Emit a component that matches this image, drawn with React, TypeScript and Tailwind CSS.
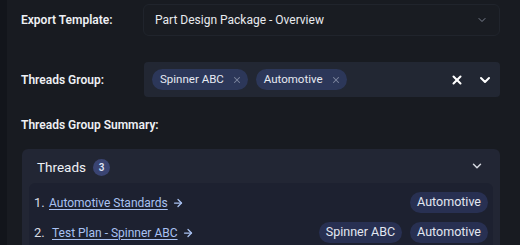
import { ChevronDown, X, ArrowRight } from "lucide-react";

const THREADS = [
  { n: 1, title: "Automotive Standards", tags: ["Automotive"], indent: "w-[15px]" },
  { n: 2, title: "Test Plan - Spinner ABC", tags: ["Spinner ABC", "Automotive"], indent: "w-[18px]" },
];

function Chip({ label }: { label: string }) {
  return (
    <span className="flex items-center gap-[8px] h-[21px] pl-[8px] pr-[6px] rounded-full bg-[#2c3759] text-[11.5px] text-[#e6e9f2]">
      {label}
      <X className="w-2.5 h-2.5 text-[#7d869e]" strokeWidth={2.5} />
    </span>
  );
}

export default function App() {
  return (
    <div
      className="w-[520px] h-[245px] overflow-hidden flex bg-[#181b21] text-white"
      style={{ fontFamily: "Roboto, 'Noto Sans', sans-serif" }}
    >
      <div className="w-[7px] flex-shrink-0 bg-[#12151b]" />
      <div className="flex-1 pl-[14px] pr-[20px] pt-[4px]">
        {/* Export Template */}
        <div className="flex items-center h-[32px]">
          <div className="w-[122px] text-[12px] font-semibold text-[#eef0f4]">Export Template:</div>
          <div className="flex-1 h-[32px] flex items-center justify-between pl-[11px] pr-[11px] rounded-md border border-[#20242c] bg-[#191c22]">
            <span className="text-[12px] text-[#e8eaee]">Part Design Package - Overview</span>
            <ChevronDown className="w-3 h-3 text-[#7b8190]" />
          </div>
        </div>

        {/* Threads Group */}
        <div className="flex items-center h-[35px] mt-[26px]">
          <div className="w-[123px] text-[12px] font-semibold text-[#eef0f4]">Threads Group:</div>
          <div className="flex-1 h-[35px] flex items-center gap-[8px] pl-[8px] pr-[7px] rounded-[4px] bg-[#222733]">
            <Chip label="Spinner ABC" />
            <Chip label="Automotive" />
            <div className="ml-auto flex items-center gap-[13px]">
              <X className="w-3.5 h-3.5 text-white" strokeWidth={3.5} />
              <ChevronDown className="w-4 h-4 text-white" strokeWidth={3} />
            </div>
          </div>
        </div>

        <div className="mt-[19px] text-[12px] font-semibold text-[#eef0f4] leading-[18px]">
          Threads Group Summary:
        </div>

        {/* Summary card */}
        <div className="mt-[15px] ml-[1px] rounded-t-md bg-[#222634] pt-[5px] px-[7px]">
          <div className="flex items-center h-[26px] pl-[8px] pr-[9px]">
            <span className="text-[13.5px] text-[#eef0f4]">Threads</span>
            <span className="ml-[7px] w-[17px] h-[17px] rounded-full bg-[#3a4472] flex items-center justify-center text-[10px] font-semibold text-[#dfe4f5]">
              3
            </span>
            <ChevronDown className="ml-auto -mt-[3px] w-3.5 h-3.5 text-[#d6d9e0]" strokeWidth={2.5} />
          </div>
          <div className="mt-[3px] rounded-t-md bg-[#1d2130] pl-[5px] pr-[5px] pt-[9px] h-[80px]">
            {THREADS.map((t) => (
              <div key={t.n} className="flex items-center h-[21px] mb-[9px]">
                <span className={`text-[13px] text-[#d9dce4] ${t.indent}`}>{t.n}.</span>
                <a className="text-[12px] text-[#a9c1f2] underline underline-offset-2">{t.title}</a>
                <ArrowRight className="ml-[4px] w-3 h-3 text-[#a9c1f2]" strokeWidth={2.5} />
                <div className="ml-auto flex gap-[8px]">
                  {t.tags.map((tag) => (
                    <span
                      key={tag}
                      className="h-[21px] px-[7px] flex items-center rounded-full bg-[#283052] text-[12.5px] text-[#e3e7f1]"
                    >
                      {tag}
                    </span>
                  ))}
                </div>
              </div>
            ))}
          </div>
        </div>
      </div>
    </div>
  );
}
